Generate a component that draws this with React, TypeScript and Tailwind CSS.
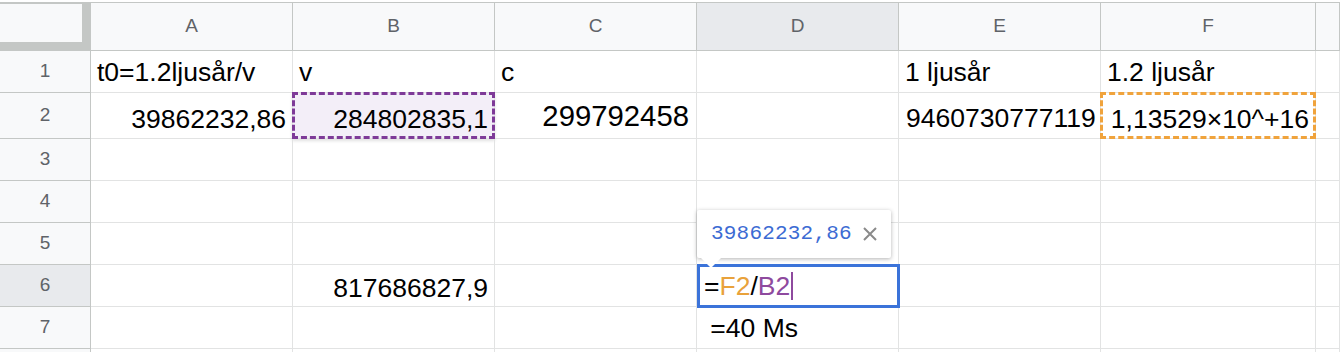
import React from "react";

const FONT = "font-['Liberation_Sans',Arial,sans-serif]";

const COLS = [
  { id: "A", w: "w-[202px]" },
  { id: "B", w: "w-[202px]" },
  { id: "C", w: "w-[202px]" },
  { id: "D", w: "w-[202px]" },
  { id: "E", w: "w-[202px]" },
  { id: "F", w: "w-[215px]" },
  { id: "G", w: "flex-1" },
];

const ROWS = [
  { n: 1, h: "h-[42px]" },
  { n: 2, h: "h-[46px]" },
  { n: 3, h: "h-[42px]" },
  { n: 4, h: "h-[42px]" },
  { n: 5, h: "h-[42px]" },
  { n: 6, h: "h-[42px]" },
  { n: 7, h: "h-[42px]" },
  { n: 8, h: "h-[42px]" },
];

// plain cell values
const values: Record<string, { text: string; right?: boolean }> = {
  A1: { text: "t0=1.2ljusår/v" },
  B1: { text: "v" },
  C1: { text: "c" },
  E1: { text: "1 ljusår" },
  F1: { text: "1.2 ljusår" },
  A2: { text: "39862232,86", right: true },
  B2: { text: "284802835,1", right: true },
  F2: { text: "1,13529×10^+16", right: true },
  B6: { text: "817686827,9", right: true },
  D7: { text: " =40 Ms" },
};

const FormulaTip = () => (
  <>
    {/* value preview */}
    <div className="absolute left-0 top-[-55px] w-[194px] h-[48px] bg-white rounded-[2px] shadow-[0_1px_4px_rgba(0,0,0,0.3)] flex items-center pl-[14px] z-20">
      <span className="font-['Liberation_Mono',monospace] text-[21px] text-[#3c6bd3] tracking-[0.2px]">
        39862232,86
      </span>
      <svg className="ml-[10px]" width="16" height="16" viewBox="0 0 16 16">
        <path d="M2 2 L14 14 M14 2 L2 14" stroke="#8a8a8a" strokeWidth="2" />
      </svg>
    </div>
    <svg className="absolute left-[3px] top-[-8px] z-30" width="22" height="12" viewBox="0 0 22 12">
      <polygon points="0,0 22,0 11,11" fill="white" />
    </svg>
    {/* editor */}
    <div className="absolute left-0 top-[-1px] w-[203px] h-[44px] border-[3px] border-[#3b73d9] bg-white z-10 flex items-center pl-[4px]">
      <span className="text-[26.5px] leading-[30px] text-black">=</span>
      <span className="text-[26.5px] leading-[30px] text-[#e9a23b]">F2</span>
      <span className="text-[26.5px] leading-[30px] text-black">/</span>
      <span className="text-[26.5px] leading-[30px] text-[#8e4a9e]">B2</span>
      <span className="w-[2px] h-[28px] bg-[#8e4a9e] ml-[1px]" />
    </div>
  </>
);

const Cell = ({ col, row, w }: { col: string; row: number; w: string }) => {
  const key = `${col}${row}`;
  const v = values[key];
  const base = `relative ${w} h-full border-r border-b border-[#e2e3e3] shrink-0`;

  if (key === "C2") {
    return (
      <div className={`${base} flex items-center justify-end px-[7px]`}>
        <span className="text-[29.3px] leading-[32px] text-black">299792458</span>
      </div>
    );
  }

  if (key === "E2") {
    // overflowing number, clipped by the filled F2
    return (
      <div className={`${base} flex items-end pl-[7px] pr-[4px] pb-[4px]`}>
        <div className="w-full overflow-hidden">
          <span className="text-[26.5px] leading-[30px] text-black whitespace-nowrap">
            94607307771190
          </span>
        </div>
      </div>
    );
  }

  if (key === "D6") {
    return (
      <div className={base}>
        <FormulaTip />
      </div>
    );
  }

  const padB = row === 1 || row === 7 ? "pb-[5px]" : row === 2 ? "pb-[4px]" : "pb-[3px]";
  return (
    <div
      className={`${base} flex items-end px-[6px] ${padB} ${
        v?.right ? "justify-end" : "justify-start"
      } ${key === "B2" ? "bg-[#f3eef8]" : ""}`}
    >
      {v && (
        <span className="text-[26.5px] leading-[30px] text-black whitespace-pre">{v.text}</span>
      )}
      {key === "B2" && (
        <div className="absolute left-[-1px] top-[-1px] right-[-1px] bottom-[-1px] border-[3px] border-dashed border-[#7e3a98] shadow-[0_2px_3px_rgba(0,0,0,0.12)]" />
      )}
      {key === "F2" && (
        <div className="absolute left-[-1px] top-[-1px] right-[-1px] bottom-[-1px] border-[3px] border-dashed border-[#f0a33c]" />
      )}
    </div>
  );
};

export default function App() {
  return (
    <div className={`w-[1340px] h-[352px] overflow-hidden bg-white ${FONT}`}>
      {/* column headers */}
      <div className="mt-[2px] h-[49px] flex border-t border-[#c4c7c5]">
        <div className="w-[91px] h-full shrink-0 bg-[#c4c7c5] border-r border-[#c4c7c5]">
          <div className="w-[82px] h-[38px] mt-px bg-[#f8f9fa]" />
        </div>
        {COLS.map((c) => (
          <div
            key={c.id}
            className={`${c.w} shrink-0 h-full flex items-center justify-center border-r border-b border-[#c4c7c5] text-[19px] text-[#5f6368] ${
              c.id === "D" ? "bg-[#e8eaed]" : "bg-[#f8f9fa]"
            }`}
          >
            {c.id === "G" ? "" : c.id}
          </div>
        ))}
      </div>

      {/* rows */}
      {ROWS.map((r) => (
        <div key={r.n} className={`${r.h} flex`}>
          <div
            className={`w-[91px] shrink-0 h-full flex items-center justify-center border-r border-b border-[#c4c7c5] text-[19px] text-[#5f6368] ${
              r.n === 6 ? "bg-[#e8eaed]" : "bg-[#f8f9fa]"
            }`}
          >
            {r.n < 8 ? r.n : ""}
          </div>
          {COLS.map((c) => (
            <Cell key={c.id} col={c.id} row={r.n} w={c.w} />
          ))}
        </div>
      ))}
    </div>
  );
}
